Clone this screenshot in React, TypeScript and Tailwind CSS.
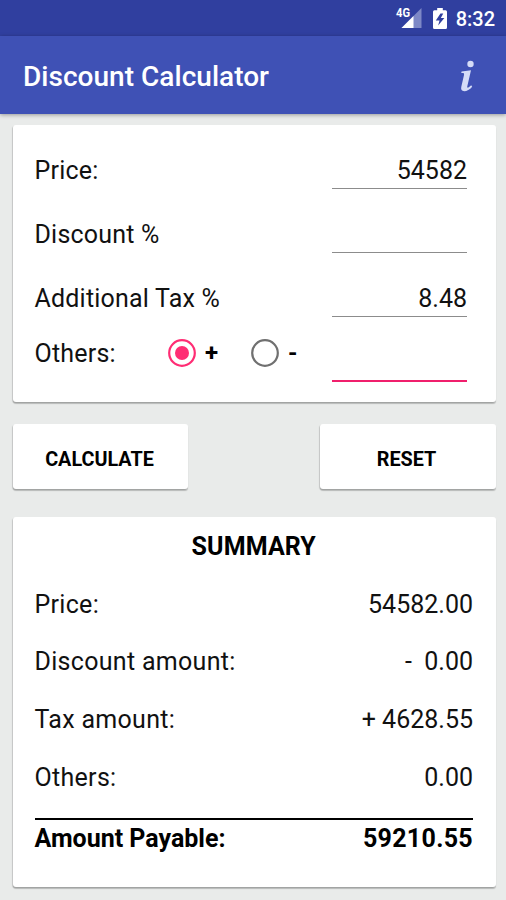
import { useState } from 'react';

const inputs = [
  { label: 'Price:', value: '54582' },
  { label: 'Discount %', value: '' },
  { label: 'Additional Tax %', value: '8.48' },
];

const summary = [
  { label: 'Price:', value: '54582.00' },
  { label: 'Discount amount:', value: '-  0.00' },
  { label: 'Tax amount:', value: '+ 4628.55' },
  { label: 'Others:', value: '0.00' },
];

const cardStyle =
  'bg-white rounded-[3px] shadow-[0_2px_1px_rgba(0,0,0,0.2),-1px_1px_1px_rgba(0,0,0,0.14)]';

const StatusBar = () => (
  <div className="h-9 shrink-0 bg-[#303f9f] flex items-center justify-end pr-[11px] text-white">
    <svg width="27" height="22" viewBox="0 0 27 22" className="mr-[11px]">
      <path d="M26.5 1V21H6.5Z" fill="#7d88c6" />
      <path d="M18.5 9V21H6.500Z" fill="#fff" />
      <path d="M0 0H15V8L11 12H0Z" fill="#303f9f" />
      <text x="1" y="10" fontSize="12" fontWeight="700" fontFamily="Roboto" textLength="14" lengthAdjust="spacingAndGlyphs" fill="#fff">4G</text>
    </svg>
    <svg width="14" height="21" viewBox="0 0 15 21" preserveAspectRatio="none" className="mr-[9px]">
      <path d="M4.5 0h6v2.2h3A1.5 1.5 0 0 1 15 3.7v15.800a1.500 1.500 0 0 1-1.500 1.500h-12A1.500 1.500 0 0 1 0 19.500V3.700a1.500 1.500 0 0 1 1.500-1.500h3Z" fill="#fff" />
      <path d="M8 5.500 3 12.500h4L5.500 17.500 12.200 10H8.400L11 5.500Z" fill="#303f9f" />
    </svg>
    <span className="text-[20px] leading-9 font-medium relative top-px">8:32</span>
  </div>
);

const Radio = ({ checked, onSelect, label }: { checked: boolean; onSelect: () => void; label: string }) => (
  <button type="button" role="radio" aria-checked={checked} onClick={onSelect} className="flex items-center">
    <svg width="28" height="28" viewBox="0 0 28 28">
      <circle cx="14" cy="14" r="12.800" fill="none" stroke={checked ? '#ff2d74' : '#707070'} strokeWidth="2.200" />
      {checked && <circle cx="14" cy="14" r="7" fill="#ff2d74" />}
    </svg>
    <span className="ml-[9px] pt-px text-[24px] leading-7 font-bold text-black">{label}</span>
  </button>
);

const App = () => {
  const [sign, setSign] = useState('+');

  return (
    <div className="w-[506px] h-[900px] overflow-hidden flex flex-col bg-[#e9ebea] font-[Roboto,sans-serif] text-[#111]">
      <StatusBar />

      <header className="h-[78px] shrink-0 bg-[#3f51b5] flex items-center justify-between pl-[23px] pr-[32px] text-white shadow-[0_1px_4px_rgba(0,0,0,0.35)]">
        <h1 className="text-[28px] leading-8 font-medium pt-[3px] tracking-[0.03px]">Discount Calculator</h1>
        <svg width="14" height="32" viewBox="0 0 14 32" fill="#d5dcf7" className="mt-px">
          <circle cx="10.500" cy="4" r="3.200" />
          <path d="M1.600 11.500 11 10.300 7.300 26.200c-.3 1.600.4 1.800 1.500 1l2.400-1.900 1 1.400C9.800 29.500 6.800 31.200 4.300 31.200 1.600 31.200.7 29.300 1.300 26.800L4 15c.3-1.300-.1-1.900-1.400-1.900H1.200Z" />
        </svg>
      </header>

      <main className="flex flex-col pl-[13px] pr-2.5 pt-[11px]">
        <section className={`h-[277px] pl-[21.5px] pr-[29px] pt-[13px] ${cardStyle}`}>
          {inputs.map((item) => (
            <div key={item.label} className="h-16 flex items-start justify-between text-[25px]">
              <span className="leading-[65px] tracking-[0.2px]">{item.label}</span>
              <span className="w-[135px] h-[51px] pt-[14px] leading-[38px] text-right border-b border-[#8c8c8c]">{item.value}</span>
            </div>
          ))}
          <div className="h-[52px] flex items-end justify-between text-[25px]">
            <span className="w-[133.5px] leading-[30px] mb-[13px] tracking-[0.2px]">Others:</span>
            <div role="radiogroup" className="flex gap-[33px] mb-[15px] mr-auto">
              <Radio label="+" checked={sign === '+'} onSelect={() => setSign('+')} />
              <Radio label="-" checked={sign === '-'} onSelect={() => setSign('-')} />
            </div>
            <span className="w-[135px] h-0.5 bg-[#f01f6c]" />
          </div>
        </section>

        <div className="flex justify-between mt-[22px]">
          <button className={`w-[175px] h-[65px] pt-1.5 pr-0.5 text-[19.8px] font-bold text-black ${cardStyle}`}>CALCULATE</button>
          <button className={`w-[176px] h-[65px] pt-1.5 pr-[3px] text-[19.8px] font-bold text-black ${cardStyle}`}>RESET</button>
        </div>

        <section className={`h-[370px] mt-[28px] pl-[21.5px] pr-[23px] pt-[14px] text-[25px] ${cardStyle}`}>
          <h2 className="text-center font-bold text-black leading-8 mb-[12.9px] tracking-[0.1px]">SUMMARY</h2>
          {summary.map((row) => (
            <div key={row.label} className="h-[57.6px] leading-[58px] flex justify-between">
              <span className="tracking-[0.3px]">{row.label}</span>
              <span className="whitespace-pre">{row.value}</span>
            </div>
          ))}
          <div className="flex justify-between border-t-2 border-black font-bold text-black leading-[38px] mt-[11.4px]">
            <span>Amount Payable:</span>
            <span className="tracking-[0.3px]">59210.55</span>
          </div>
        </section>
      </main>
    </div>
  );
};

export default App;
